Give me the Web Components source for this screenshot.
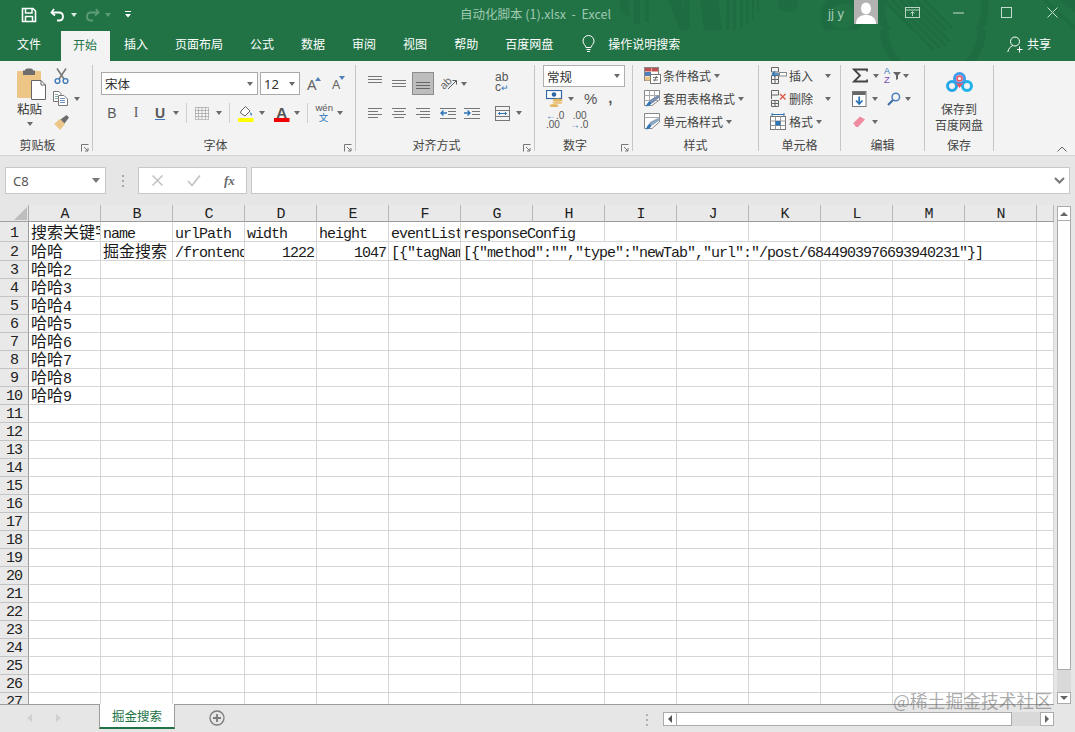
<!DOCTYPE html>
<html lang="zh"><head><meta charset="utf-8"><title>Excel</title>
<style>
html,body{margin:0;padding:0;height:732px;overflow:hidden;background:#e6e6e6}
body{font-family:"Noto Sans CJK SC","Liberation Sans",sans-serif;font-size:12px;color:#444}
</style></head>
<body>
<x-app>
  <x-titlebar></x-titlebar>
  <x-tabs></x-tabs>
  <x-ribbon></x-ribbon>
  <x-formula></x-formula>
  <x-sheet></x-sheet>
  <x-sheetbar></x-sheetbar>
</x-app>
<script>
const svg=(w,h,b)=>`<svg xmlns="http://www.w3.org/2000/svg" width="${w}" height="${h}" viewBox="0 0 ${w} ${h}" fill="none">${b}</svg>`;
const lines=(ys,x1,x2,c='#777')=>ys.map(y=>`<path d="M${x1} ${y}.5H${x2}" stroke="${c}"/>`).join('');
const ICONS={
 save:svg(16,16,'<path d="M1.5 1.5H12L14.5 4V14.5H1.5Z" stroke="#fff" stroke-width="1.6"/><path d="M4.5 1.5V6H11V1.5M4.5 14.5V9.5H11.5V14.5" stroke="#fff" stroke-width="1.5"/>'),
 undo:svg(16,15,'<path d="M4 2L1.5 5.5 5 8.5" stroke="#fff" stroke-width="1.8"/><path d="M2 5.5H9C14 5.5 14.5 13 9.5 13.5H7" stroke="#fff" stroke-width="1.8"/>'),
 redo:svg(16,15,'<path d="M12 2L14.5 5.5 11 8.5" stroke="#5c9c78" stroke-width="1.8"/><path d="M14 5.5H7C2 5.5 1.5 13 6.5 13.5H9" stroke="#5c9c78" stroke-width="1.8"/>'),
 qat:svg(7,8,'<path d="M0 .5H6" stroke="#fff"/><path d="M0 3H6L3 6.5Z" fill="#fff"/>'),
 ribbonmode:svg(15,12,'<rect x=".5" y=".5" width="14" height="10" stroke="#b9d6c5"/><path d="M.5 3H14.5" stroke="#b9d6c5"/><path d="M7.5 9V5M5.5 6.5L7.5 4.5 9.5 6.5" stroke="#b9d6c5"/>'),
 min:svg(11,2,'<path d="M0 1H11" stroke="#c4dccd"/>'),
 max:svg(11,11,'<rect x=".5" y=".5" width="10" height="10" stroke="#c4dccd"/>'),
 close:svg(11,11,'<path d="M.5 .5L10.5 10.5M10.5 .5L.5 10.5" stroke="#c4dccd"/>'),
 avatar:svg(24,24,'<rect width="24" height="24" fill="#b2b2b2"/><ellipse cx="12" cy="8.5" rx="5" ry="6" fill="#fff"/><path d="M2 24C2 17 7 15 12 15S22 17 22 24Z" fill="#fff"/>'),
 bulb:svg(13,18,'<path d="M4 12.5C3.5 10 1 9 1 6A5.5 5.5 0 0 1 12 6C12 9 9.5 10 9 12.5Z" stroke="#fff"/><path d="M4.5 14.5H8.5M5 16.5H8" stroke="#fff"/>'),
 share:svg(16,17,'<circle cx="8" cy="5.5" r="4.5" stroke="#fff"/><path d="M.8 16C1.5 12.5 3.5 10.5 5.5 9.8" stroke="#fff"/><path d="M10 13.5H15.5M12.5 10.5V16.5" stroke="#fff"/>'),
 paste:svg(30,32,'<rect y="3" width="24" height="27" rx="1" fill="#edc586"/><path d="M8 2.5C8 1 9 .5 12 .5S16 1 16 2.5H18V7H6V2.5Z" fill="#6d6d6d"/><path d="M14.5 12.5H24L28.5 17V31.5H14.5Z" fill="#fff" stroke="#666"/><path d="M24 12.5V17H28.5" stroke="#666"/>'),
 cut:svg(15,16,'<path d="M3 .5L10 11M12 .5L5 11" stroke="#777" stroke-width="1.5"/><circle cx="3.5" cy="13" r="2.4" stroke="#3f78b8" stroke-width="1.4"/><circle cx="11.5" cy="13" r="2.4" stroke="#3f78b8" stroke-width="1.4"/>'),
 copy:svg(15,15,'<path d="M.5 .5H6L8 2.5V10.5H.5Z" fill="#fff" stroke="#777"/><path d="M5.5 4.5H11L14.5 8V14.5H5.5Z" fill="#fff" stroke="#777"/>'+lines([7,9,11],7,12,'#6b8fb8')+lines([3,5,7],2,5,'#8aa')),
 brush:svg(17,17,'<path d="M7 5L1 10C3 11 5 14 7 16L12 10Z" fill="#edc586"/><path d="M7.5 5.5L11.5 9.5 16 3.5 13.5 1Z" fill="#6d6d6d"/>'),
 border:svg(14,13,'<path d="M.5 .5H13.5V12.5H.5ZM.5 6.5H13.5M7 .5V12.5M3.5 .5V12.5M10.5 .5V12.5M.5 3.5H13.5M.5 9.5H13.5" stroke="#888" stroke-dasharray="1 1"/>'),
 fill:svg(17,17,'<path d="M4 6L8.5 1.5 13 6 8 11 3.5 8Z" fill="#fff" stroke="#666"/><path d="M13.5 7C15 9 15.5 10 14.5 10.5 13.5 10.5 13 9 13.5 7Z" fill="#2e75b6"/><rect x="1" y="13" width="15.5" height="4" fill="#ffff00"/>'),
 color:svg(17,17,'<rect x="1" y="13" width="15.5" height="4" fill="#f00000"/><text x="8.7" y="12.5" text-anchor="middle" font-family="Liberation Sans" font-weight="bold" font-size="15" fill="#555">A</text>'),
 mergec:svg(15,15,'<rect x=".5" y=".5" width="14" height="14" stroke="#777"/><path d="M.5 4.5H14.5M.5 10.5H14.5" stroke="#777"/><path d="M3.5 7.5H11.5M5 6L3.5 7.5 5 9M10 6L11.5 7.5 10 9" stroke="#2e75b6"/>'),
 orient:svg(18,16,'<text x="0" y="0" transform="translate(4 14) rotate(-45)" font-family="Liberation Sans" font-size="11" fill="#666">ab</text><path d="M8 13L16 5M12.5 4.5H16.5V8.5" stroke="#5a5a5a"/>'),
 acct:svg(18,18,'<rect x=".5" y=".5" width="15" height="8" fill="#fff" stroke="#2f66a5" stroke-width="1.2"/><circle cx="8" cy="4.5" r="2.3" fill="#2f66a5"/><ellipse cx="11.5" cy="10" rx="5" ry="1.6" fill="#e3b861"/><ellipse cx="11.5" cy="12.5" rx="5" ry="1.6" fill="#edc586"/><ellipse cx="8" cy="15.5" rx="4.5" ry="1.6" fill="#e3b861"/>'),
 cf:svg(17,17,'<rect x=".5" y=".5" width="14" height="13" fill="#fff" stroke="#888"/><rect x="1" y="1" width="6" height="3.5" fill="#c0504d"/><rect x="7.5" y="1" width="6.5" height="3.5" fill="#c0504d"/><rect x="1" y="5" width="6" height="4" fill="#4f7fb8"/><rect x="1" y="9.5" width="6" height="4" fill="#edc586"/><rect x="6.5" y="7.5" width="10" height="9" fill="#fff" stroke="#777"/><path d="M9 10.5H14M9 13H14M12.5 9L10.5 14.5" stroke="#555" stroke-width=".8"/>'),
 tf:svg(17,17,'<path d="M.5 .5H15.5V10L8 15.5H.5Z" fill="#fff" stroke="#888"/><path d="M5.5 .5V15M10.5 .5V11M.5 5.5H15.5M.5 10.5H15.5" stroke="#aaa"/><path d="M3 15L6 10 14 5 16 7 9 13Z" fill="#7a8fb0"/><path d="M2 16.5C3 13 4 12 6 11.5L7.5 13.5C6 15 5 16 2 16.5Z" fill="#2e75b6"/>'),
 cs:svg(17,17,'<path d="M.5 .5H15.5V9L8 15.5H.5Z" fill="#fff" stroke="#888"/><path d="M.5 4.5H15.5" stroke="#aaa"/><path d="M3 14L6 9 14 5 16 7 9 12Z" fill="#8fa7c2"/><path d="M2 16.5C3 13 4 12 6 11L7.5 13C6 15 5 16 2 16.5Z" fill="#2e75b6"/>'),
 ins:svg(17,17,'<path d="M1.5 .5H8.5V5M1.5 5H8.5M1.5 .5V5M1.5 8.5H8.5V16.5H1.5ZM1.5 12.5H8.5M5 8.5V16.5" stroke="#666"/><rect x="9.5" y="5.5" width="7" height="3.5" fill="#fff" stroke="#888"/><path d="M9 7H2.5M5 4.5L2.5 7 5 9.5" stroke="#2e75b6" stroke-width="1.3"/>'),
 del:svg(17,17,'<path d="M1.5 .5H8.5V5H1.5ZM1.5 5V9M1.5 10.5H8.5V16.5H1.5ZM1.5 13.5H8.5M5 10.5V16.5" stroke="#666"/><path d="M10 4L15.5 9.5M15.5 4L10 9.5" stroke="#e0584b" stroke-width="1.4"/>'),
 fmt:svg(17,17,'<rect x=".5" y="3.5" width="15" height="13" fill="#fff" stroke="#777"/><path d="M5.5 3.5V16.5M10.5 3.5V16.5M.5 8H15.5M.5 12.5H15.5" stroke="#999"/><rect x="5.5" y="8" width="5" height="4.5" fill="#2e75b6"/><path d="M2 1.5H14M2 0V3M14 0V3" stroke="#2e75b6"/>'),
 sigma:svg(16,15,'<path d="M15 3.5V1.5H2L8 7.5 2 13.5H15V11.5" stroke="#444" stroke-width="1.8"/>'),
 sort:svg(18,17,'<path d="M9 5H17L14 8.5V12L12 13V8.5Z" fill="#666"/><text x="0" y="7" font-family="Liberation Sans" font-size="9" fill="#2e75b6">A</text><text x="0" y="16" font-family="Liberation Sans" font-size="9.5" fill="#7a4fb5">Z</text>'),
 down:svg(15,16,'<rect x=".5" y=".5" width="13.5" height="15" fill="#fff" stroke="#777"/><rect x="1" y="1" width="12.5" height="3" fill="#666"/><path d="M7.2 5.5V13M4 9.5L7.2 13 10.5 9.5" stroke="#2e75b6" stroke-width="1.8"/>'),
 find:svg(14,14,'<circle cx="8.8" cy="5" r="3.8" stroke="#4f7fb8" stroke-width="1.5"/><path d="M6 8L1 13" stroke="#3f6fa8" stroke-width="2.2"/>'),
 erase:svg(14,13,'<path d="M1 8.5L8 1.5 13 4.5 6 12 3 12Z" fill="#ef8aa0"/><path d="M1 8.5L3.5 12" stroke="#fff"/>'),
 baidu:svg(27,21,'<circle cx="6" cy="14" r="4.5" stroke="#23a9e8" stroke-width="3"/><circle cx="21" cy="14" r="4.5" stroke="#1fb3ea" stroke-width="3"/><circle cx="13.5" cy="6.5" r="5" stroke="#3d9be9" stroke-width="3"/><path d="M9 10C11 12 16 12 18 10L13.5 16Z" fill="#e9546b"/><circle cx="13.5" cy="6.5" r="3.3" fill="#e9546b"/><circle cx="13.5" cy="6.5" r="1.6" fill="#fff"/>'),
 exp:svg(8,8,'<path d="M.5 7.5V.5H7.5" stroke="#777"/><path d="M3 3L7 7M7 4V7H4" stroke="#777"/>'),
 chev:svg(10,6,'<path d="M.5 5.5L5 1 9.5 5.5" stroke="#666"/>'),
 fx:svg(16,14,'<text x="0" y="11" font-family="Liberation Serif" font-style="italic" font-weight="bold" font-size="13" fill="#6a6a6a">fx</text>'),
 x:svg(13,13,'<path d="M1.5 1.5L11.5 11.5M11.5 1.5L1.5 11.5" stroke="#c3c3c3" stroke-width="1.6"/>'),
 check:svg(14,13,'<path d="M1 7L5 11.5 13 1.5" stroke="#c3c3c3" stroke-width="1.7"/>'),
 plus:svg(16,16,'<circle cx="8" cy="8" r="7" stroke="#7b7b7b" stroke-width="1.3"/><path d="M4 8H12M8 4V12" stroke="#7b7b7b" stroke-width="1.8"/>')
};
class XIco extends HTMLElement{connectedCallback(){if(this.shadowRoot)return;const s=this.attachShadow({mode:'open'});s.innerHTML=`<style>:host{display:inline-flex;flex:none;line-height:0}</style>${ICONS[this.getAttribute('n')]||''}`;}}
customElements.define('x-ico',XIco);

class XApp extends HTMLElement{constructor(){super();this.attachShadow({mode:'open'}).innerHTML=`<style>:host{display:flex;flex-direction:column;width:1075px;height:732px;position:relative;overflow:hidden;background:#e6e6e6}
.wm{position:absolute;left:893px;top:688px;font:17.8px/24px "Noto Sans CJK SC",sans-serif;color:rgba(90,90,90,.5);white-space:nowrap}</style><slot></slot><div class="wm">@稀土掘金技术社区</div>`;}}
customElements.define('x-app',XApp);

class XTitlebar extends HTMLElement{constructor(){super();this.attachShadow({mode:'open'}).innerHTML=`<style>
:host{display:flex;height:30px;background:#217346;color:#fff;align-items:center;position:relative;flex:none}
.pat{position:absolute;left:0;top:0;pointer-events:none}
.c{width:0;height:0;border:3px solid transparent;border-top:4px solid #dcebe2;border-bottom:0;margin-top:1px}
.c.d{border-top-color:#5c9c78}
.title{position:absolute;left:460px;top:0;line-height:27px;font-size:12.5px;color:#9fc8b0;white-space:pre;}
.qa{display:flex;align-items:center;padding-left:21px;margin-top:-1px}
.r{margin-left:auto;display:flex;align-items:center;height:30px;position:relative}
.u{font:13px "Liberation Sans",sans-serif;color:#a5ccb6;margin-right:10px;margin-top:-4px}
</style>
<svg class="pat" width="1075" height="30" viewBox="0 0 1075 30" fill="none">
<g fill="#1e6c41">
<path d="M620 0h9v17l-9-6zM634 0h6v24h-6zM645 0h4v22h-4zM668 0h14l6 30h-8zM684 0h6v28h-6zM700 0h18l4 30h-18zM726 0h4v30h-4zM733 0h3v30h-3zM740 0h3v28h-3zM746 0h3v24h-3zM752 0h2v20h-2zM757 0h2v12h-2z"/>
<circle cx="788" cy="2" r="10"/>
<path d="M1060 0h15v12zM1042 0h5l28 26v4z"/></g>
<circle cx="842" cy="16" r="17" stroke="#1e6c41" stroke-width="9"/>
<circle cx="933" cy="6" r="52" stroke="#1e6c41" stroke-width="7"/>
<g stroke="#1e6c41" stroke-width="3"><path d="M884 0l46 46M892 0l42 42M900 0l38 38M908 0l34 34M916 0l30 30M924 0l28 28"/></g>
</svg>
<div class="qa" style="position:relative">
 <x-ico n="save"></x-ico>
 <x-ico n="undo" style="margin-left:13px"></x-ico><span class="c" style="margin-left:5px"></span>
 <x-ico n="redo" style="margin-left:7px;"></x-ico><span class="c d" style="margin-left:5px"></span>
 <x-ico n="qat" style="margin-left:14px"></x-ico>
</div>
<div class="title">自动化脚本 (1).xlsx  -  Excel</div>
<div class="r">
 <span class="u">jj y</span>
 <x-ico n="avatar" style="margin-right:27px;margin-top:-6px"></x-ico>
 <x-ico n="ribbonmode" style="margin-right:33px;margin-top:-5px"></x-ico>
 <x-ico n="min" style="margin-right:37px;margin-top:-5px"></x-ico>
 <x-ico n="max" style="margin-right:35px;margin-top:-5px"></x-ico>
 <x-ico n="close" style="margin-right:17px;margin-top:-5px"></x-ico>
</div>`;}}
customElements.define('x-titlebar',XTitlebar);

class XTabs extends HTMLElement{constructor(){super();this.attachShadow({mode:'open'}).innerHTML=`<style>
:host{display:flex;height:31px;color:#fff;font-size:12px;flex:none;position:relative;background:#217346}
.t{display:flex;align-items:center;padding:0 13.5px 3px;line-height:16px;white-space:nowrap;position:relative}
.t.a{background:#f3f3f3;color:#217346;padding:0 13px 3px 12px;margin:1px 0 0 6.5px}
.sp{margin-left:auto}
.clip{position:absolute;left:0;top:0;width:1075px;height:31px;overflow:hidden;pointer-events:none}
</style>
<div class="clip"><svg width="1075" height="31" style="display:block" fill="none"><path d="M880 0A53 53 0 0 0 986 0L978 0A45 45 0 0 1 888 0Z" transform="translate(0 -1)" fill="#1e6c41"/><g stroke="#1e6c41" stroke-width="3"><path d="M914 0l20 20M922 0l18 18M930 0l16 16M938 0l12 12"/></g></svg></div>
<div class="t" style="margin-left:3.5px">文件</div><div class="t a">开始</div><div class="t" style="margin-left:.5px">插入</div><div class="t">页面布局</div><div class="t">公式</div><div class="t">数据</div><div class="t">审阅</div><div class="t">视图</div><div class="t">帮助</div><div class="t">百度网盘</div>
<div class="t" style="padding-right:0;margin-left:2px"><x-ico n="bulb"></x-ico></div><div class="t" style="padding-left:13px">操作说明搜索</div>
<div class="sp"></div><div class="t" style="padding:0 24px 3px 0"><x-ico n="share" style="margin-right:4px"></x-ico>共享</div>`;}}
customElements.define('x-tabs',XTabs);

class XGroup extends HTMLElement{constructor(){super();const e=this.hasAttribute('exp');this.attachShadow({mode:'open'}).innerHTML=`<style>
:host{display:block;height:94px;padding-top:4px;box-sizing:border-box;flex:none}
.in{height:86px;border-right:1px solid #c6c6c6;display:flex;flex-direction:column}
.b{flex:1;min-height:0;position:relative}
.l{display:flex;height:15px;margin-bottom:-1px;line-height:15px;font-size:12px;color:#444;flex:none}
.tx{flex:1;text-align:center}
.e{width:17px;flex:none;display:flex;justify-content:flex-end;padding:7px 3px 0 0;box-sizing:border-box}
</style><div class="in"><div class="b"><slot></slot></div><div class="l"><div class="tx" part="l">${this.getAttribute('label')}</div>${e?'<div class="e"><x-ico n="exp"></x-ico></div>':''}</div></div>`;}}
customElements.define('x-group',XGroup);

class XRibbon extends HTMLElement{constructor(){super();this.attachShadow({mode:'open'}).innerHTML=`<style>
:host{display:flex;height:95px;box-sizing:border-box;background:#f3f3f3;border-bottom:1px solid #d3d3d3;font-size:12px;color:#444;flex:none;position:relative}
.c{display:inline-block;width:0;height:0;border:3.5px solid transparent;border-top:4px solid #6a6a6a;border-bottom:0;flex:none}
.row{display:flex;align-items:center}
.sel{display:flex;align-items:center;box-sizing:border-box;height:23px;background:#fff;border:1px solid #a9a9a9;padding:0 4px 0 3px;justify-content:space-between;color:#333}
.vs{width:1px;height:20px;background:#cfcfcf;flex:none}
.act{box-sizing:border-box;width:22px;height:23px;background:#bdbdbd;border:1px solid #8c8c8c;display:flex;align-items:center;justify-content:center}
.cmd{height:23px;display:flex;align-items:center;white-space:nowrap}
.ab{font:12px/10px "Liberation Sans",sans-serif;color:#555;text-align:left;width:16px}
.big{font:600 18px "Liberation Sans",sans-serif;color:#555}
.tiny{font:10px/8.5px "Liberation Sans",sans-serif;color:#555}
.fb{width:14px;text-align:center;flex:none;font:14px/16px "Liberation Sans",sans-serif;color:#5a5a5a}
</style>
<x-group label="剪贴板" exp style="width:93px">
 <div class="row" style="align-items:flex-start;padding:3px 0 0 17px">
  <div style="width:36px;display:flex;flex-direction:column">
   <x-ico n="paste"></x-ico>
   <div style="line-height:16px;margin-top:1px;font-size:12.5px;color:#333">粘贴</div>
   <span class="c" style="margin:5px 0 0 10px"></span>
  </div>
  <div style="display:flex;flex-direction:column;align-items:flex-start">
   <x-ico n="cut" style="margin-left:1px"></x-ico>
   <div class="row" style="margin-top:7px"><x-ico n="copy"></x-ico><span class="c" style="margin-left:6px"></span></div>
   <x-ico n="brush" style="margin-top:8px"></x-ico>
  </div>
 </div>
</x-group>
<x-group label="字体" exp style="width:263px">
 <div style="padding:7px 0 0 8px">
  <div class="row">
   <div class="sel" style="width:157px;font-size:12.5px">宋体<span class="c"></span></div>
   <div class="sel" style="width:40px;margin-left:2px;font:13px 'Noto Sans',sans-serif;padding:0 4px 0 3px">12<span class="c"></span></div>
   <span style="font:15px 'Noto Sans',sans-serif;margin-left:7px;color:#666;width:10px">A</span><span class="c" style="border-top:0;border-bottom:4px solid #4f7fb8;margin:-10px 0 0 -2px"></span>
   <span style="font:13px 'Noto Sans',sans-serif;margin-left:11px;color:#666;width:9px">A</span><span class="c" style="margin:-12px 0 0 -2px;border-top-color:#4f7fb8"></span>
  </div>
  <div class="row" style="margin-top:8px;height:20px;padding-left:4px">
   <b class="fb">B</b><i class="fb" style="margin-left:10px;font-family:'Liberation Serif'">I</i><u class="fb" style="margin-left:10px;font-weight:700;text-decoration-color:#3f78b8">U</u>
   <span class="c" style="margin-left:5.5px"></span><i class="vs" style="margin-left:7px"></i>
   <x-ico n="border" style="margin-left:8px"></x-ico><span class="c" style="margin-left:7px"></span><i class="vs" style="margin-left:7px"></i>
   <x-ico n="fill" style="margin-left:7px"></x-ico><span class="c" style="margin-left:5px"></span>
   <x-ico n="color" style="margin-left:8px"></x-ico><span class="c" style="margin-left:4px"></span><i class="vs" style="margin-left:7px"></i>
   <div style="margin-left:8px;width:16px;text-align:center;line-height:9px;margin-top:-1px"><div style="font:9.5px/9px 'Liberation Sans',sans-serif;color:#555">wén</div><div style="font-size:9.5px;line-height:10px;color:#2e75b6">文</div></div>
   <span class="c" style="margin-left:5px"></span>
  </div>
 </div>
</x-group>
<x-group label="对齐方式" exp style="width:179px">
 <div style="padding:7px 0 0 12px">
  <div class="row" style="height:23px">
   <svg width="14" height="23" fill="none" style="margin-top:-6px"><path d="M0 7.5H14M0 10.5H14M0 13.5H14" stroke="#777"/></svg>
   <svg width="14" height="23" fill="none" style="margin-left:10px"><path d="M0 8.5H14M0 11.5H14M0 14.5H14" stroke="#777"/></svg>
   <div class="act" style="margin-left:6px"><svg width="14" height="12" fill="none"><path d="M0 4.5H14M0 7.5H14M0 10.5H14" stroke="#666"/></svg></div>
   <x-ico n="orient" style="margin-left:6px"></x-ico><span class="c" style="margin-left:3px"></span>
   <div class="ab" style="margin-left:28px;margin-top:-3px">ab<br>c<span style="color:#2e75b6;font-size:9px">↵</span></div>
  </div>
  <div class="row" style="height:20px;margin-top:8px">
   <svg width="14" height="12" fill="none"><path d="M0 1.5H14M0 4.5H10M0 7.5H14M0 10.5H10" stroke="#777"/></svg>
   <svg width="14" height="12" fill="none" style="margin-left:10px"><path d="M0 1.5H14M2 4.5H12M0 7.5H14M2 10.5H12" stroke="#777"/></svg>
   <svg width="14" height="12" fill="none" style="margin-left:10px"><path d="M0 1.5H14M4 4.5H14M0 7.5H14M4 10.5H14" stroke="#777"/></svg>
   <svg width="16" height="13" fill="none" style="margin-left:10px"><path d="M0 1.5H16M8 4.5H16M8 7.5H16M0 11.5H16" stroke="#777"/><path d="M7 6H1M3.5 3.5L1 6 3.5 8.5" stroke="#2e75b6" stroke-width="1.4"/></svg>
   <svg width="16" height="13" fill="none" style="margin-left:8px"><path d="M0 1.5H16M8 4.5H16M8 7.5H16M0 11.5H16" stroke="#777"/><path d="M0 6H6M3.5 3.5L6 6 3.5 8.5" stroke="#2e75b6" stroke-width="1.4"/></svg>
   <x-ico n="mergec" style="margin-left:15px"></x-ico><span class="c" style="margin-left:6px"></span>
  </div>
 </div>
</x-group>
<x-group label="数字" exp style="width:98px">
 <div style="padding:0 0 0 8px">
  <div class="sel" style="width:82px;height:22px;font-size:12.5px;border-color:#b0b0b0">常规<span class="c"></span></div>
  <div class="row" style="margin-top:2px;height:19px;padding-left:3px">
   <x-ico n="acct"></x-ico><span class="c" style="margin-left:4px"></span>
   <span class="big" style="margin-left:10px;font-size:15px;font-weight:400">%</span>
   <span class="big" style="margin-left:11px;font-size:15px;font-weight:700;margin-top:-3px">,</span>
  </div>
  <div class="row" style="margin-top:4px;padding-left:3px">
   <div class="tiny" style="width:24px"><span style="color:#2e75b6">←</span>.0<br>.00</div>
   <div class="tiny">&nbsp;.00<br><span style="color:#2e75b6">→</span>.0</div>
  </div>
 </div>
</x-group>
<x-group label="样式" style="width:126px">
 <div style="padding-left:11px;margin-top:-1px">
  <div class="cmd"><x-ico n="cf" style="margin-right:2px"></x-ico>条件格式<span class="c" style="margin-left:3px"></span></div>
  <div class="cmd"><x-ico n="tf" style="margin-right:2px"></x-ico>套用表格格式<span class="c" style="margin-left:3px"></span></div>
  <div class="cmd"><x-ico n="cs" style="margin-right:2px"></x-ico>单元格样式<span class="c" style="margin-left:3px"></span></div>
 </div>
</x-group>
<x-group label="单元格" style="width:82px">
 <div style="padding-left:11px;margin-top:-1px">
  <div class="cmd"><x-ico n="ins" style="margin-right:2px"></x-ico>插入<span class="c" style="margin-left:12px"></span></div>
  <div class="cmd"><x-ico n="del" style="margin-right:2px"></x-ico>删除<span class="c" style="margin-left:12px"></span></div>
  <div class="cmd"><x-ico n="fmt" style="margin-right:2px"></x-ico>格式<span class="c" style="margin-left:3px"></span></div>
 </div>
</x-group>
<x-group label="编辑" style="width:84px">
 <div style="padding-left:11px;margin-top:-1px">
  <div class="cmd"><x-ico n="sigma"></x-ico><span class="c" style="margin-left:5px"></span><x-ico n="sort" style="margin-left:5px"></x-ico><span class="c" style="margin-left:1px"></span></div>
  <div class="cmd"><x-ico n="down"></x-ico><span class="c" style="margin-left:5px"></span><x-ico n="find" style="margin-left:9px"></x-ico><span class="c" style="margin-left:4px"></span></div>
  <div class="cmd"><x-ico n="erase"></x-ico><span class="c" style="margin-left:6px"></span></div>
 </div>
</x-group>
<x-group label="保存" style="width:69px">
 <div style="display:flex;flex-direction:column;align-items:center;padding-top:7px;line-height:16px">
  <x-ico n="baidu"></x-ico><div style="margin-top:8px;text-align:center">保存到<br>百度网盘</div>
 </div>
</x-group>
<div style="flex:1;display:flex;justify-content:flex-end;align-items:flex-end;padding:0 8px 3px 0"><x-ico n="chev"></x-ico></div>`;}}
customElements.define('x-ribbon',XRibbon);

class XFormula extends HTMLElement{constructor(){super();this.attachShadow({mode:'open'}).innerHTML=`<style>
:host{display:flex;height:49px;box-sizing:border-box;padding:11px 5px 11px 5px;background:#e6e6e6;flex:none;align-items:stretch}
.b{background:#fff;border:1px solid #c8c8c8;box-sizing:border-box;display:flex;align-items:center}
.c{width:0;height:0;border:4px solid transparent;border-top:5px solid #777;border-bottom:0;flex:none}
.dots{width:2px;height:12px;background:repeating-linear-gradient(#a8a8a8 0 2px,transparent 2px 5px);margin:0 14px 0 16px;align-self:center}
</style>
<div class="b" style="width:101px;padding:0 5px 0 7px;justify-content:space-between;font:13px 'Noto Sans',sans-serif;color:#555">C8<span class="c"></span></div>
<div class="dots"></div>
<div class="b" style="width:109px;padding-left:12px"><x-ico n="x"></x-ico><x-ico n="check" style="margin-left:23px"></x-ico><x-ico n="fx" style="margin-left:23px"></x-ico></div>
<div class="b" style="flex:1;margin-left:4px;justify-content:flex-end;padding-right:4px"><svg width="11" height="7" fill="none"><path d="M1 1L5.5 5.5 10 1" stroke="#777" stroke-width="2"/></svg></div>`;}}
customElements.define('x-formula',XFormula);

class XSheet extends HTMLElement{constructor(){super();
 const cols='ABCDEFGHIJKLMN'.split('');
 const heights=[20,19];for(let i=3;i<=27;i++)heights.push(18);
 let h=`<div class="corner"><svg width="14" height="14"><path d="M14 1V14H1Z" fill="#bdbdbd"/></svg></div>`;
 cols.forEach(c=>h+=`<div class="ch">${c}</div>`);h+=`<div class="ch e"></div>`;
 const cj=t=>t.replace(/[\u4e00-\u9fff]+/g,m=>`<span class="z">${m}</span>`);
 const data={1:{A:'搜索关键字',B:'name',C:'urlPath',D:'width',E:'height',F:'eventList',G:'responseConfig'},
  2:{A:'哈哈',B:'掘金搜索',C:'/frontend',D:'#1222',E:'#1047',F:'[{"tagName',G:'[{"method":"","type":"newTab","url":"/post/6844903976693940231"}]'}};
 for(let i=3;i<=10;i++)data[i]={A:'哈哈'+(i-1)};
 heights.forEach((ht,ri)=>{const r=ri+1;const d=data[r]||{};
  h+=`<div class="rh">${r}</div>`;
  let skip=0;
  cols.forEach((c,ci)=>{
   if(skip>0){skip--;return;}
   let v=d[c]||'',cl='cell',st='';
   if(v[0]==='#'){v=v.slice(1);cl+=' num';}
   if(r===1&&c==='G'){st='grid-column:span 2;';skip=1;}
   if(r===2&&c==='G'){st='grid-column:span 8;';skip=7;}
   h+=`<div class="${cl}" style="${st}"><span class="t">${cj(v)}</span></div>`;
  });
  h+=`<div class="cell"></div>`;
 });
 const rows='17px '+heights.map(x=>x+'px').join(' ');
 this.attachShadow({mode:'open'}).innerHTML=`<style>
:host{display:flex;height:499px;flex:none;background:#e6e6e6;overflow:hidden}
.g{width:1054px;height:499px;overflow:hidden;display:grid;grid-template-columns:29px repeat(14,72px) 17px;grid-template-rows:${rows};font:15px "Liberation Mono",monospace;letter-spacing:-1px;color:#1a1a1a;flex:none;align-content:start;background:#e6e6e6}
.corner{box-sizing:border-box;border-right:1px solid #aaa;border-bottom:1px solid #a0a0a0;display:flex;justify-content:flex-end;align-items:flex-end;padding:0 1px 1px 0}
.ch{box-sizing:border-box;border-bottom:1px solid #9c9c9c;border-right:1px solid #b8b8b8;text-align:center;line-height:20px;background:#e9e9e9;color:#222}
.rh{box-sizing:border-box;border-right:1px solid #9c9c9c;border-bottom:1px solid #c4c4c4;background:#e9e9e9;display:flex;align-items:flex-end;justify-content:center;line-height:14px;color:#222;min-height:0;overflow:hidden}
.cell{background:#fff;border-right:1px solid #d6d6d6;border-bottom:1px solid #d6d6d6;box-sizing:border-box;overflow:hidden;white-space:pre;display:flex;align-items:flex-end;padding:0 0 0 2px;line-height:12px;min-width:0;min-height:0}
.cell.num{justify-content:flex-end;padding:0 2px 0 0}
.t{display:block;white-space:pre}
.z{font:16px/15px "Noto Sans CJK SC",sans-serif;letter-spacing:0}
.vs{width:21px;flex:none;box-sizing:border-box;padding:1px 4px 0 3px;display:flex;flex-direction:column;height:499px}
.bt{height:15px;background:#fff;border:1px solid #ababab;box-sizing:border-box;display:flex;align-items:center;justify-content:center;flex:none}
.th{height:449px;background:#fff;border:1px solid #ababab;border-top:0;box-sizing:border-box;flex:none}
.tr{flex:1;background:#d9d9d9}
.up{width:0;height:0;border:4px solid transparent;border-bottom:4px solid #666;border-top:0}
.dn{width:0;height:0;border:4px solid transparent;border-top:4px solid #666;border-bottom:0}
</style><div class="g">${h}</div><div class="vs"><div class="bt"><span class="up"></span></div><div class="th"></div><div class="tr"></div><div class="bt" style="height:12px"><span class="dn"></span></div></div>`;}}
customElements.define('x-sheet',XSheet);

class XSheetbar extends HTMLElement{constructor(){super();this.attachShadow({mode:'open'}).innerHTML=`<style>
:host{display:flex;height:28px;flex:none;background:#e6e6e6;position:relative;margin-right:21px;border-top:1px solid #9c9c9c;box-sizing:border-box;align-items:flex-start}
.nav{width:0;height:0;border:4px solid transparent;border-left:0;border-right:5px solid #d0d0d0;margin-top:9px}
.nr{border-right:0;border-left:5px solid #d0d0d0}
.tab{width:76px;height:25px;margin-top:-1px;background:#fff;box-sizing:border-box;border:1px solid #9c9c9c;border-top:0;border-bottom:2px solid #217346;color:#217346;font-size:12.5px;line-height:23px;text-align:center;flex:none}
.dots{width:2px;height:12px;background:repeating-linear-gradient(#b0b0b0 0 2px,transparent 2px 5px);margin:9px 0 0 0}
.hs{display:flex;margin-left:15px;margin-top:7px;height:14px;width:391px;flex:none}
.b{width:14px;height:14px;background:#fff;border:1px solid #ababab;box-sizing:border-box;display:flex;align-items:center;justify-content:center;flex:none}
.th{width:335px;background:#fff;border:1px solid #ababab;border-left:0;box-sizing:border-box}
.tr{flex:1;background:#d9d9d9}
.l{width:0;height:0;border:4px solid transparent;border-left:0;border-right:4px solid #555}
.r{width:0;height:0;border:4px solid transparent;border-right:0;border-left:4px solid #666}
</style>
<span class="nav" style="margin-left:27px"></span><span class="nav nr" style="margin-left:24px"></span>
<div class="tab" style="margin-left:38px">掘金搜索</div>
<x-ico n="plus" style="margin:5px 0 0 34px"></x-ico>
<div class="dots" style="margin-left:421px"></div>
<div class="hs"><div class="b"><span class="l"></span></div><div class="th"></div><div class="tr"></div><div class="b"><span class="r"></span></div></div>`;}}
customElements.define('x-sheetbar',XSheetbar);
</script>
</body></html>
